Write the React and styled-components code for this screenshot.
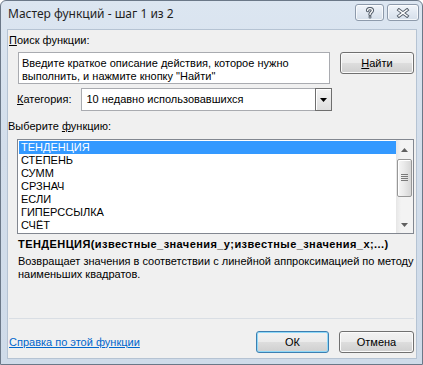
import React from "react";
import styled, { createGlobalStyle } from "styled-components";

const GlobalStyle = createGlobalStyle`
  html, body { margin: 0; padding: 0; background: #ffffff; }
  body { width: 423px; height: 365px; overflow: hidden; }
`;

const Window = styled.div`
  width: 423px;
  height: 365px;
  box-sizing: border-box;
  display: flex;
  flex-direction: column;
  border: 1px solid #6b7888;
  border-radius: 6px 6px 0 0;
  background: linear-gradient(180deg, #dce6f1 0%, #d3deeb 40%, #cfdbe9 100%);
  font-family: "Liberation Sans", Arial, sans-serif;
  font-size: 11px;
  line-height: 13px;
  color: #000;
`;

const TitleBar = styled.div`
  height: 29px;
  flex: none;
  display: flex;
  align-items: flex-start;
  padding: 0 3px 0 7px;
`;

const Title = styled.div`
  flex: 1;
  margin-top: 5px;
  font-family: "Noto Sans", "Open Sans", sans-serif;
  font-size: 12px;
  line-height: 16px;
  color: #1f1f1f;
`;

const CaptionButtons = styled.div`
  display: flex;
  gap: 3px;
  margin-top: 3px;
`;

const CaptionButton = styled.div`
  width: ${(p) => p.$w}px;
  height: 17px;
  box-sizing: border-box;
  border: 1px solid #8d9aab;
  border-radius: 3px;
  background: linear-gradient(180deg, #f1f5fa 0%, #e2e9f2 50%, #d5dfea 100%);
  box-shadow: inset 0 0 0 1px rgba(255, 255, 255, 0.7);
  display: flex;
  align-items: center;
  justify-content: center;
`;

const Frame = styled.div`
  flex: 1;
  display: flex;
  padding: 0 7px 6px 7px;
`;

const Client = styled.div`
  flex: 1;
  display: flex;
  flex-direction: column;
  background: #f0f0f0;
  box-shadow: 0 0 0 1px #b5c3d3;
  padding: 4px 0 5px 0;
`;

const Label = styled.div`
  margin: ${(p) => p.$m || "0"};
  white-space: nowrap;
`;

const Key = styled.span`
  text-decoration: underline;
`;

const SearchRow = styled.div`
  display: flex;
  align-items: flex-start;
  gap: 10px;
  margin: 5px 0 0 10px;
`;

const TextBox = styled.div`
  width: 312px;
  height: 32px;
  box-sizing: border-box;
  border: 1px solid #a9abb0;
  background: #ffffff;
  padding: 4px 3px 0 3px;
`;

const Button = styled.div`
  width: ${(p) => p.$w}px;
  height: 22px;
  box-sizing: border-box;
  border: 1px solid ${(p) => (p.$default ? "#3c7fb1" : "#707070")};
  border-radius: 3px;
  background: linear-gradient(180deg, #f2f2f2 0%, #ebebeb 48%, #dddddd 52%, #cfcfcf 100%);
  box-shadow: inset 0 0 0 1px ${(p) => (p.$default ? "#8fd8f8" : "#fbfbfb")};
  display: flex;
  align-items: center;
  justify-content: center;
`;

const CategoryRow = styled.div`
  display: flex;
  align-items: center;
  margin: 4px 0 0 9px;
`;

const Select = styled.div`
  margin-left: 9px;
  width: 251px;
  height: 23px;
  box-sizing: border-box;
  border: 1px solid #a9abb0;
  background: #ffffff;
  display: flex;
  align-items: center;
`;

const SelectText = styled.div`
  flex: 1;
  padding-left: 5px;
  white-space: nowrap;
`;

const DropButton = styled.div`
  width: 17px;
  height: 23px;
  margin: -1px -1px -1px 0;
  box-sizing: border-box;
  border: 1px solid #6e6e6e;
  background: linear-gradient(180deg, #f4f4f4 0%, #dedede 100%);
  box-shadow: inset 1px 1px 0 #ffffff;
  display: flex;
  align-items: center;
  justify-content: center;
`;

const ListBox = styled.div`
  margin: 6px 0 0 9px;
  width: 397px;
  height: 95px;
  box-sizing: border-box;
  border: 1px solid #828790;
  background: #ffffff;
  display: flex;
`;

const Items = styled.div`
  flex: 1;
  padding: 1px 0 0 1px;
`;

const Item = styled.div`
  height: 13px;
  line-height: 13px;
  padding-left: 2px;
  white-space: nowrap;
  background: ${(p) => (p.$selected ? "#3399ff" : "transparent")};
  color: ${(p) => (p.$selected ? "#ffffff" : "#000000")};
`;

const ScrollBar = styled.div`
  width: 17px;
  display: flex;
  flex-direction: column;
  background: linear-gradient(90deg, #e6e6e6 0%, #f3f3f3 30%, #f3f3f3 100%);
`;

const ScrollArrow = styled.div`
  height: 17px;
  display: flex;
  align-items: center;
  justify-content: center;
  padding-top: ${(p) => (p.$down ? "0" : "2px")};
  box-sizing: border-box;
`;

const Track = styled.div`
  flex: 1;
  padding: 2px 1px 0 1px;
`;

const Thumb = styled.div`
  height: 38px;
  box-sizing: border-box;
  border: 1px solid #979797;
  border-radius: 2px;
  background: linear-gradient(90deg, #f6f6f6 0%, #eaeaea 45%, #d6d6d6 100%);
  box-shadow: inset 1px 1px 0 #ffffff;
  display: flex;
  align-items: center;
  justify-content: center;
`;

const Signature = styled.div`
  margin: 4px 0 0 10px;
  font-weight: bold;
  letter-spacing: 0.42px;
  white-space: nowrap;
`;

const Description = styled.div`
  margin: 4px 0 0 10px;
  width: 398px;
`;

const Spacer = styled.div`
  flex: 1;
`;

const Separator = styled.div`
  height: 1px;
  margin: 0 0 12px 1px;
  width: 405px;
  background: #d9dee4;
`;

const Footer = styled.div`
  display: flex;
  align-items: center;
  padding: 0 2px 0 1px;
  gap: 10px;
`;

const HelpLink = styled.a`
  flex: 1;
  color: #0066cc;
  text-decoration: underline;
  white-space: nowrap;
`;

const Triangle = ({ up, color = "#000" }) => (
  <svg width="7" height="4" viewBox="0 0 7 4">
    <polygon points={up ? "3.5,0 7,4 0,4" : "0,0 7,0 3.5,4"} fill={color} />
  </svg>
);

const HelpGlyph = () => (
  <svg width="10" height="12" viewBox="0 0 10 12">
    <g fill="none" strokeLinecap="round">
      <path d="M2.6 3.6 C2.6 2 3.8 1.6 5 1.6 C6.4 1.6 7.4 2.4 7.4 3.6 C7.4 5.2 5 5.2 5 7.4" stroke="#56606c" strokeWidth="3.4" />
      <circle cx="5" cy="10" r="1.5" fill="#56606c" />
      <path d="M2.6 3.6 C2.6 2 3.8 1.6 5 1.6 C6.4 1.6 7.4 2.4 7.4 3.6 C7.4 5.2 5 5.2 5 7.4" stroke="#ffffff" strokeWidth="1.3" />
      <circle cx="5" cy="10" r="0.6" fill="#ffffff" />
    </g>
  </svg>
);

const CloseGlyph = () => (
  <svg width="14" height="10" viewBox="0 0 14 10">
    <g strokeLinecap="square">
      <path d="M3 2 L11 8 M11 2 L3 8" stroke="#56606c" strokeWidth="3.4" />
      <path d="M3 2 L11 8 M11 2 L3 8" stroke="#ffffff" strokeWidth="1.5" />
    </g>
  </svg>
);

const Grip = () => (
  <svg width="7" height="8" viewBox="0 0 7 8">
    {[0, 2, 4, 6].map((y) => (
      <rect key={y} x="0" y={y} width="7" height="1" fill="#7a7a7a" />
    ))}
  </svg>
);

const functions = ["ТЕНДЕНЦИЯ", "СТЕПЕНЬ", "СУММ", "СРЗНАЧ", "ЕСЛИ", "ГИПЕРССЫЛКА", "СЧЁТ"];

export default function App() {
  return (
    <>
      <GlobalStyle />
      <Window>
        <TitleBar>
          <Title>Мастер функций - шаг 1 из 2</Title>
          <CaptionButtons>
            <CaptionButton $w={29}><HelpGlyph /></CaptionButton>
            <CaptionButton $w={32}><CloseGlyph /></CaptionButton>
          </CaptionButtons>
        </TitleBar>
        <Frame>
          <Client>
            <Label $m="0 0 0 1px"><Key>П</Key>оиск функции:</Label>
            <SearchRow>
              <TextBox>
                Введите краткое описание действия, которое нужно
                <br />
                выполнить, и нажмите кнопку "Найти"
              </TextBox>
              <Button $w={74}><Key>Н</Key>айти</Button>
            </SearchRow>
            <CategoryRow>
              <Label><Key>К</Key>атегория:</Label>
              <Select>
                <SelectText>10 недавно использовавшихся</SelectText>
                <DropButton><Triangle /></DropButton>
              </Select>
            </CategoryRow>
            <Label $m="9px 0 0 0">Выберите <Key>ф</Key>ункцию:</Label>
            <ListBox>
              <Items>
                {functions.map((f, i) => (
                  <Item key={f} $selected={i === 0}>{f}</Item>
                ))}
              </Items>
              <ScrollBar>
                <ScrollArrow><Triangle up color="#606060" /></ScrollArrow>
                <Track>
                  <Thumb><Grip /></Thumb>
                </Track>
                <ScrollArrow $down><Triangle color="#606060" /></ScrollArrow>
              </ScrollBar>
            </ListBox>
            <Signature>ТЕНДЕНЦИЯ(известные_значения_y;известные_значения_x;...)</Signature>
            <Description>
              Возвращает значения в соответствии с линейной аппроксимацией по методу наименьших квадратов.
            </Description>
            <Spacer />
            <Separator />
            <Footer>
              <HelpLink href="#">Справка по этой функции</HelpLink>
              <Button $w={73} $default>ОК</Button>
              <Button $w={75}>Отмена</Button>
            </Footer>
          </Client>
        </Frame>
      </Window>
    </>
  );
}
